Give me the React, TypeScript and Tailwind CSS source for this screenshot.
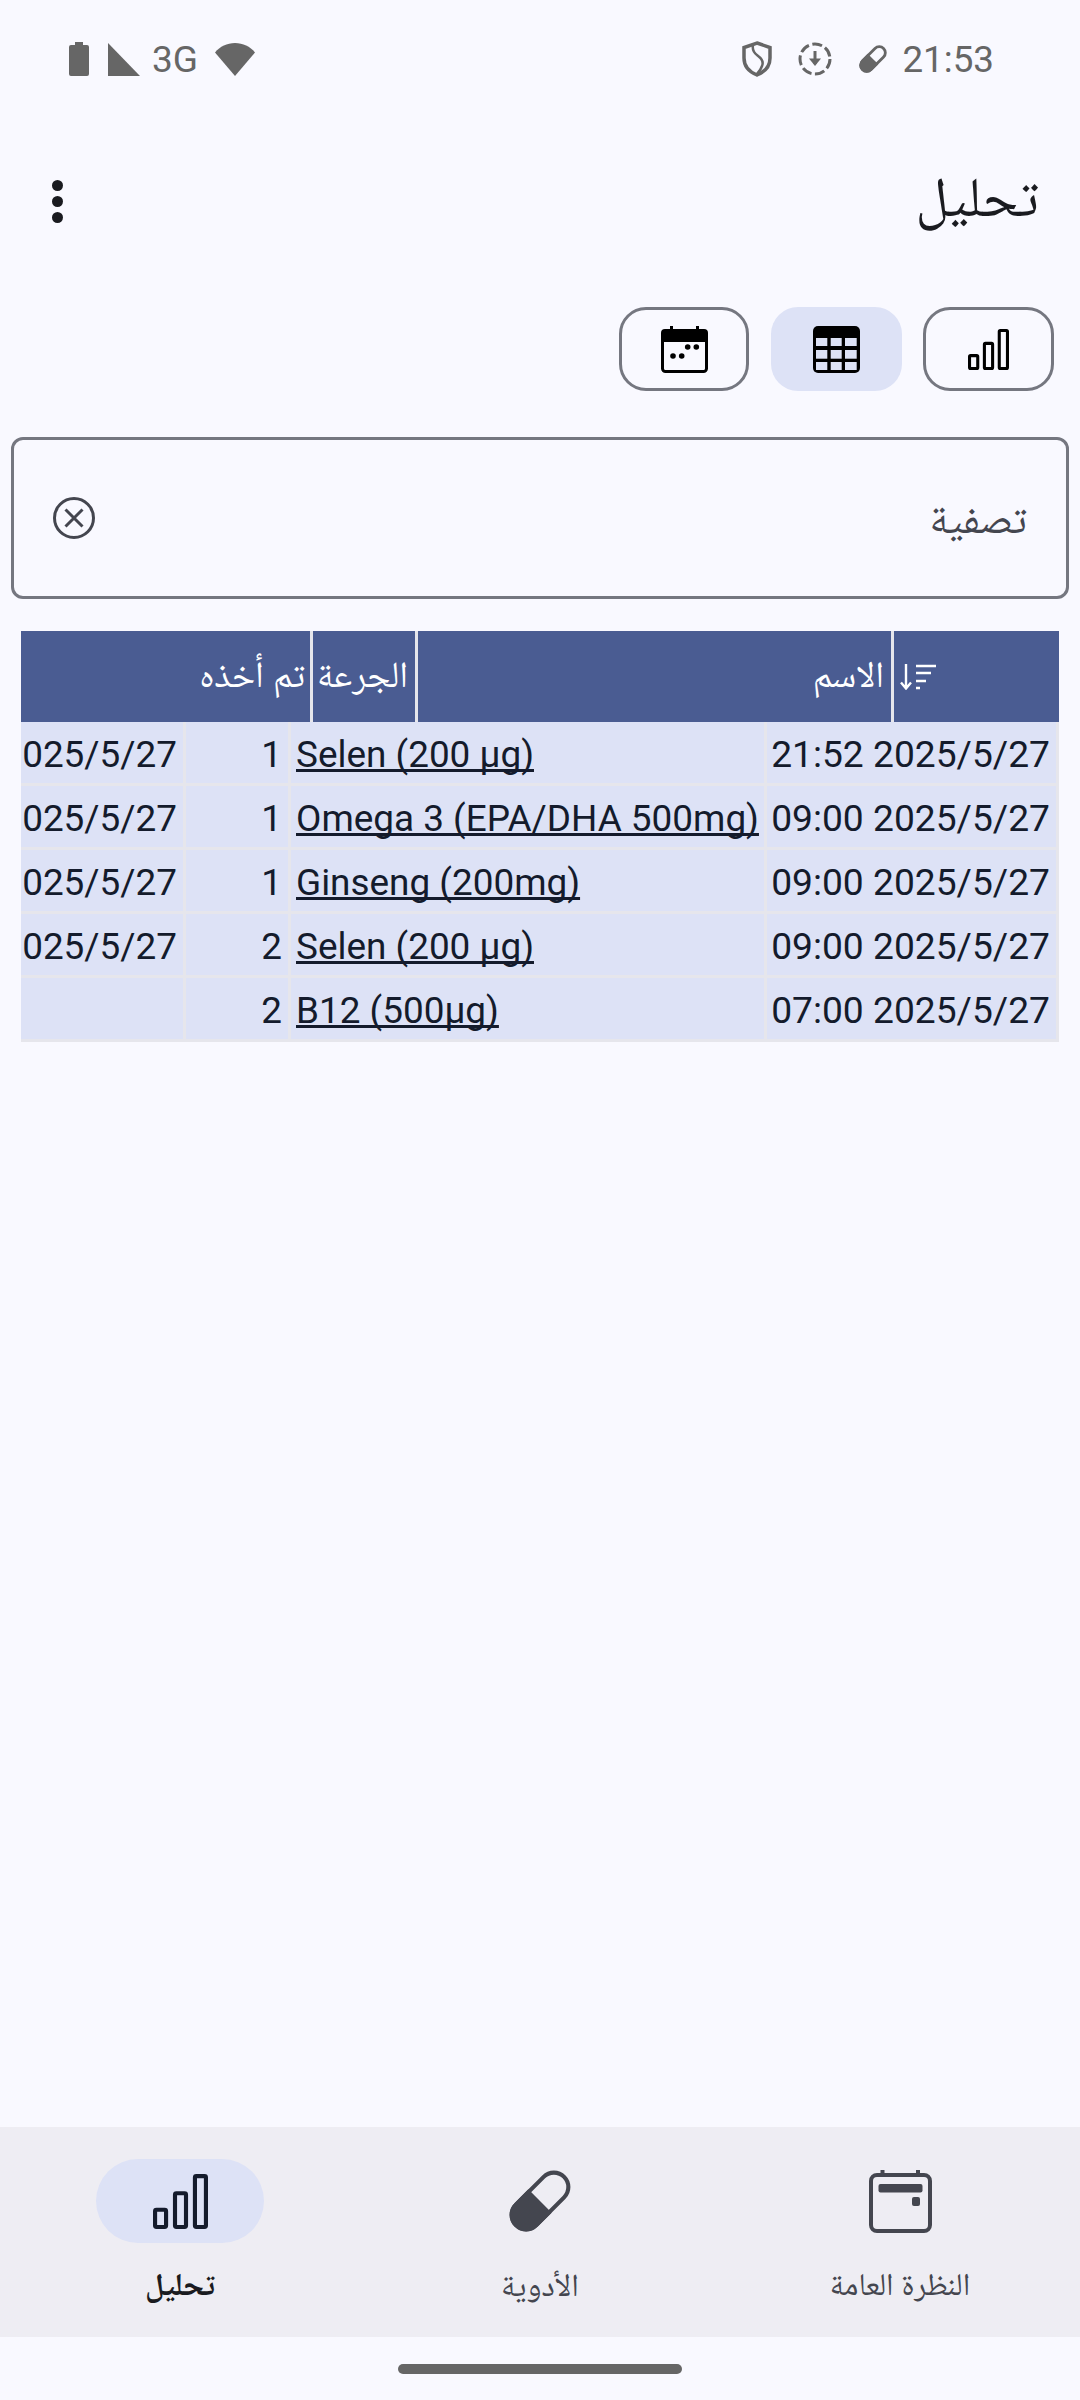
import React from "react";

const rows = [
  ["2025/5/27 21:52", "Selen (200 µg)", "1", "025/5/27"],
  ["2025/5/27 09:00", "Omega 3 (EPA/DHA 500mg)", "1", "025/5/27"],
  ["2025/5/27 09:00", "Ginseng (200mg)", "1", "025/5/27"],
  ["2025/5/27 09:00", "Selen (200 µg)", "2", "025/5/27"],
  ["2025/5/27 07:00", "B12 (500µg)", "2", ""],
];

function Pill({ size, color, stroke }: { size: number; color: string; stroke: number }) {
  return (
    <svg width={size} height={size} viewBox="0 0 60 60" fill="none">
      <g transform="rotate(-45 30 30)">
        <rect x={-5 + stroke / 2} y={14 + stroke / 2} width={70 - stroke} height={32 - stroke} rx={16 - stroke / 2} stroke={color} strokeWidth={stroke} />
        <path d="M30 14H11A16 16 0 0 0 11 46H30Z" fill={color} />
      </g>
    </svg>
  );
}

function Bars({ w, h, color, sw }: { w: number; h: number; color: string; sw: number }) {
  return (
    <svg width={w} height={h} viewBox="0 0 40 40" fill="none" stroke={color} strokeWidth={sw} strokeLinejoin="round">
      <rect x="1.5" y="26" width="8" height="12.5" rx="1" />
      <rect x="16" y="14" width="8" height="24.5" rx="1" />
      <rect x="30.5" y="1.5" width="8" height="37" rx="1" />
    </svg>
  );
}

export default function App() {
  return (
    <div dir="ltr" className="flex h-[2400px] w-[1080px] flex-col overflow-hidden bg-[#f9f9ff] font-['Roboto','Noto_Naskh_Arabic','Noto_Sans',sans-serif] text-[#1a1b20]">
      {/* status bar */}
      <div className="flex h-[118px] items-center justify-between pl-[69px] pr-[86px] text-[36.75px] text-[#666666]">
        <div className="flex items-center">
          <svg width="20" height="34" viewBox="0 0 20 34" fill="#666666"><path d="M6 0h8v3h4a2 2 0 0 1 2 2v27a2 2 0 0 1-2 2H2a2 2 0 0 1-2-2V5a2 2 0 0 1 2-2h4z" /></svg>
          <svg className="ml-[19px]" width="32" height="33" viewBox="0 0 32 33" fill="#666666"><path d="M0 0L32 33H0z" /></svg>
          <span className="ml-[12px] w-[46px] text-[37px] leading-none">3G</span>
          <svg className="ml-[17px]" width="40" height="33" viewBox="0 0 40 33" fill="#666666"><path d="M20 33L0 9.5C5 3.5 12 0 20 0s15 3.5 20 9.5z" /></svg>
        </div>
        <div className="flex items-center">
          <svg width="30" height="36" viewBox="0 0 30 36" fill="none" stroke="#666666" strokeWidth="3.5"><path d="M15 2L28 6.5V17c0 8-5.5 14-13 17C7.5 31 2 25 2 17V6.5z" /><path d="M11 4c-1 5 1 8 4.5 10.5s6.5 6 4.5 10.500c-1 3-3 6-5 8" strokeWidth="2.5" /></svg>
          <svg className="ml-[26px]" width="34" height="34" viewBox="0 0 34 34" fill="none" stroke="#666666" strokeWidth="3"><circle cx="17" cy="17" r="15" strokeDasharray="10 3.5" /><path d="M17 9v13" /><path d="M11 16.500h12l-6 7.500z" fill="#666666" stroke="none" /></svg>
          <span className="ml-[27px] flex"><Pill size={28} color="#666666" stroke={6} /></span>
          <span className="ml-[15px] mt-[2px] leading-none">21:53</span>
        </div>
      </div>

      {/* title row */}
      <div className="mt-[42px] flex h-[84px] items-center justify-between pl-[52px] pr-[41px]">
        <div className="mb-[2px] flex flex-col gap-[5px]">
          <span className="h-[11px] w-[11px] rounded-full bg-[#1a1b20]" />
          <span className="h-[11px] w-[11px] rounded-full bg-[#1a1b20]" />
          <span className="h-[11px] w-[11px] rounded-full bg-[#1a1b20]" />
        </div>
        <span dir="rtl" className="mb-[10px] text-[56px] leading-none">تحليل</span>
      </div>

      {/* view toggles */}
      <div className="mt-[63px] flex justify-end gap-[21.5px] pr-[26px]">
        <div className="flex h-[84px] w-[130px] items-center justify-center rounded-[27px] border-[3px] border-[#757780]">
          <svg width="47" height="47" viewBox="0 0 47 47" fill="none">
            <path d="M9 0h3v3h23V0h3v3h5a4 4 0 0 1 4 4v9H0V7a4 4 0 0 1 4-4h5z" fill="#000" />
            <rect x="1.5" y="6" width="44" height="39.5" rx="3" stroke="#000" strokeWidth="3" />
            <circle cx="12" cy="30" r="2.8" fill="#000" /><circle cx="20.7" cy="30" r="2.8" fill="#000" />
            <circle cx="26.7" cy="21" r="2.8" fill="#000" /><circle cx="35.3" cy="21" r="2.8" fill="#000" />
          </svg>
        </div>
        <div className="flex h-[84px] w-[131px] items-center justify-center rounded-[27px] bg-[#dde2f6]">
          <svg width="47" height="47" viewBox="0 0 47 47">
            <rect width="47" height="47" rx="5" fill="#000" />
            <g fill="#dde2f6">
              <rect x="3" y="12" width="11.3" height="8" /><rect x="17.7" y="12" width="11" height="8" /><rect x="32" y="12" width="11.7" height="8" />
              <rect x="3" y="24" width="11.3" height="8.7" /><rect x="17.7" y="24" width="11" height="8.7" /><rect x="32" y="24" width="11.7" height="8.7" />
              <rect x="3" y="36" width="11.3" height="8" /><rect x="17.7" y="36" width="11" height="8" /><rect x="32" y="36" width="11.7" height="8" />
            </g>
          </svg>
        </div>
        <div className="flex h-[84px] w-[131px] items-center justify-center rounded-[27px] border-[3px] border-[#757780]">
          <Bars w={41} h={41} color="#000" sw={3} />
        </div>
      </div>

      {/* filter */}
      <div className="ml-[11px] mr-[11px] mt-[46px] flex h-[162px] items-center justify-between rounded-[12px] border-[3px] border-[#757780] pl-[39px] pr-[39px]">
        <svg width="42" height="42" viewBox="0 0 42 42" fill="none" stroke="#44464f" strokeWidth="3"><circle cx="21" cy="21" r="19.5" /><path d="M12.5 12.5l17 17M29.5 12.5l-17 17" /></svg>
        <span dir="rtl" className="text-[42px] text-[#44464f]">تصفية</span>
      </div>

      {/* table */}
      <div dir="rtl" className="ml-[21px] mt-[32px] w-[1038px] overflow-hidden">
        <div className="flex h-[91px] bg-[#4a5c92] text-[36.75px] text-white">
          <div className="flex w-[168px] items-center justify-end border-l-[3px] border-[#e6e6ec] pl-[6px]">
            <svg width="36" height="26" viewBox="0 0 36 26" fill="none" stroke="#fff" strokeWidth="2.4"><path d="M6 0v24M1 18.5l5 6 5-6M16 2h20M16 9h15M16 17h10M16 24h4" /></svg>
          </div>
          <div className="flex w-[476px] items-center border-l-[3px] border-[#e6e6ec] pb-[4px] pr-[7px]">الاسم</div>
          <div className="flex w-[105px] items-center border-l-[3px] border-[#e6e6ec] pb-[4px] pr-[7px]">الجرعة</div>
          <div className="flex flex-1 items-center pb-[4px] pr-[5px]">تم أخذه</div>
        </div>
        <table className="w-[1038px] table-fixed border-separate border-spacing-0 border-r-[3px] border-[#e6e6ec] text-[36.9px] text-[#141b2c]">
          <colgroup>
            <col className="w-[292px]" />
            <col className="w-[476px]" />
            <col className="w-[105px]" />
            <col />
          </colgroup>
          <tbody>
            {rows.map((r, i) => (
              <tr key={i} className="h-[64px] bg-[#dde2f6]">
                <td className="whitespace-nowrap border-b-[3px] border-l-[3px] border-[#e6e6ec] pr-[6px] pt-[5px] text-right text-[37.2px]">{r[0]}</td>
                <td dir="ltr" className="whitespace-nowrap border-b-[3px] border-l-[3px] border-[#e6e6ec] pl-[8px] pt-[5px] text-left underline [text-decoration-skip-ink:none]">{r[1]}</td>
                <td className="border-b-[3px] border-l-[3px] border-[#e6e6ec] pr-[6px] pt-[5px] text-right">{r[2]}</td>
                <td className="whitespace-nowrap border-b-[3px] border-[#e6e6ec] pr-[6px] pt-[5px] text-right">{r[3]}</td>
              </tr>
            ))}
          </tbody>
        </table>
      </div>

      <div className="flex-1" />

      {/* bottom nav */}
      <div className="grid h-[210px] grid-cols-3 bg-[#eeedf3] text-[#44464f]">
        <div className="flex flex-col items-center pt-[32px]">
          <div className="flex h-[84px] w-[168px] items-center justify-center rounded-full bg-[#dde2f6]">
            <Bars w={55} h={55} color="#141b2c" sw={3} />
          </div>
          <span dir="rtl" className="mt-[16px] text-[31.5px] font-bold leading-[52px] text-[#1a1b20]">تحليل</span>
        </div>
        <div className="flex flex-col items-center pt-[32px]">
          <div className="flex h-[84px] items-center justify-center"><Pill size={62} color="#44464f" stroke={4} /></div>
          <span dir="rtl" className="mt-[16px] text-[32px] leading-[52px]">الأدوية</span>
        </div>
        <div className="flex flex-col items-center pt-[32px]">
          <div className="flex h-[84px] items-center justify-center">
            <svg width="63" height="63" viewBox="0 0 63 63" fill="none">
              <rect x="2" y="5" width="59" height="56" rx="6" stroke="#44464f" strokeWidth="4" />
              <path d="M13.5 0v5M49 0v5" stroke="#44464f" strokeWidth="4" strokeLinecap="round" />
              <rect x="9.5" y="14" width="44" height="8.5" rx="2" fill="#44464f" />
              <rect x="43" y="27" width="8" height="9" rx="2" fill="#44464f" />
            </svg>
          </div>
          <span dir="rtl" className="mt-[16px] text-[31.5px] leading-[52px]">النظرة العامة</span>
        </div>
      </div>

      {/* home indicator */}
      <div className="flex h-[63px] justify-center pt-[27px]">
        <div className="h-[10px] w-[284px] rounded-full bg-[#666666]" />
      </div>
    </div>
  );
}
